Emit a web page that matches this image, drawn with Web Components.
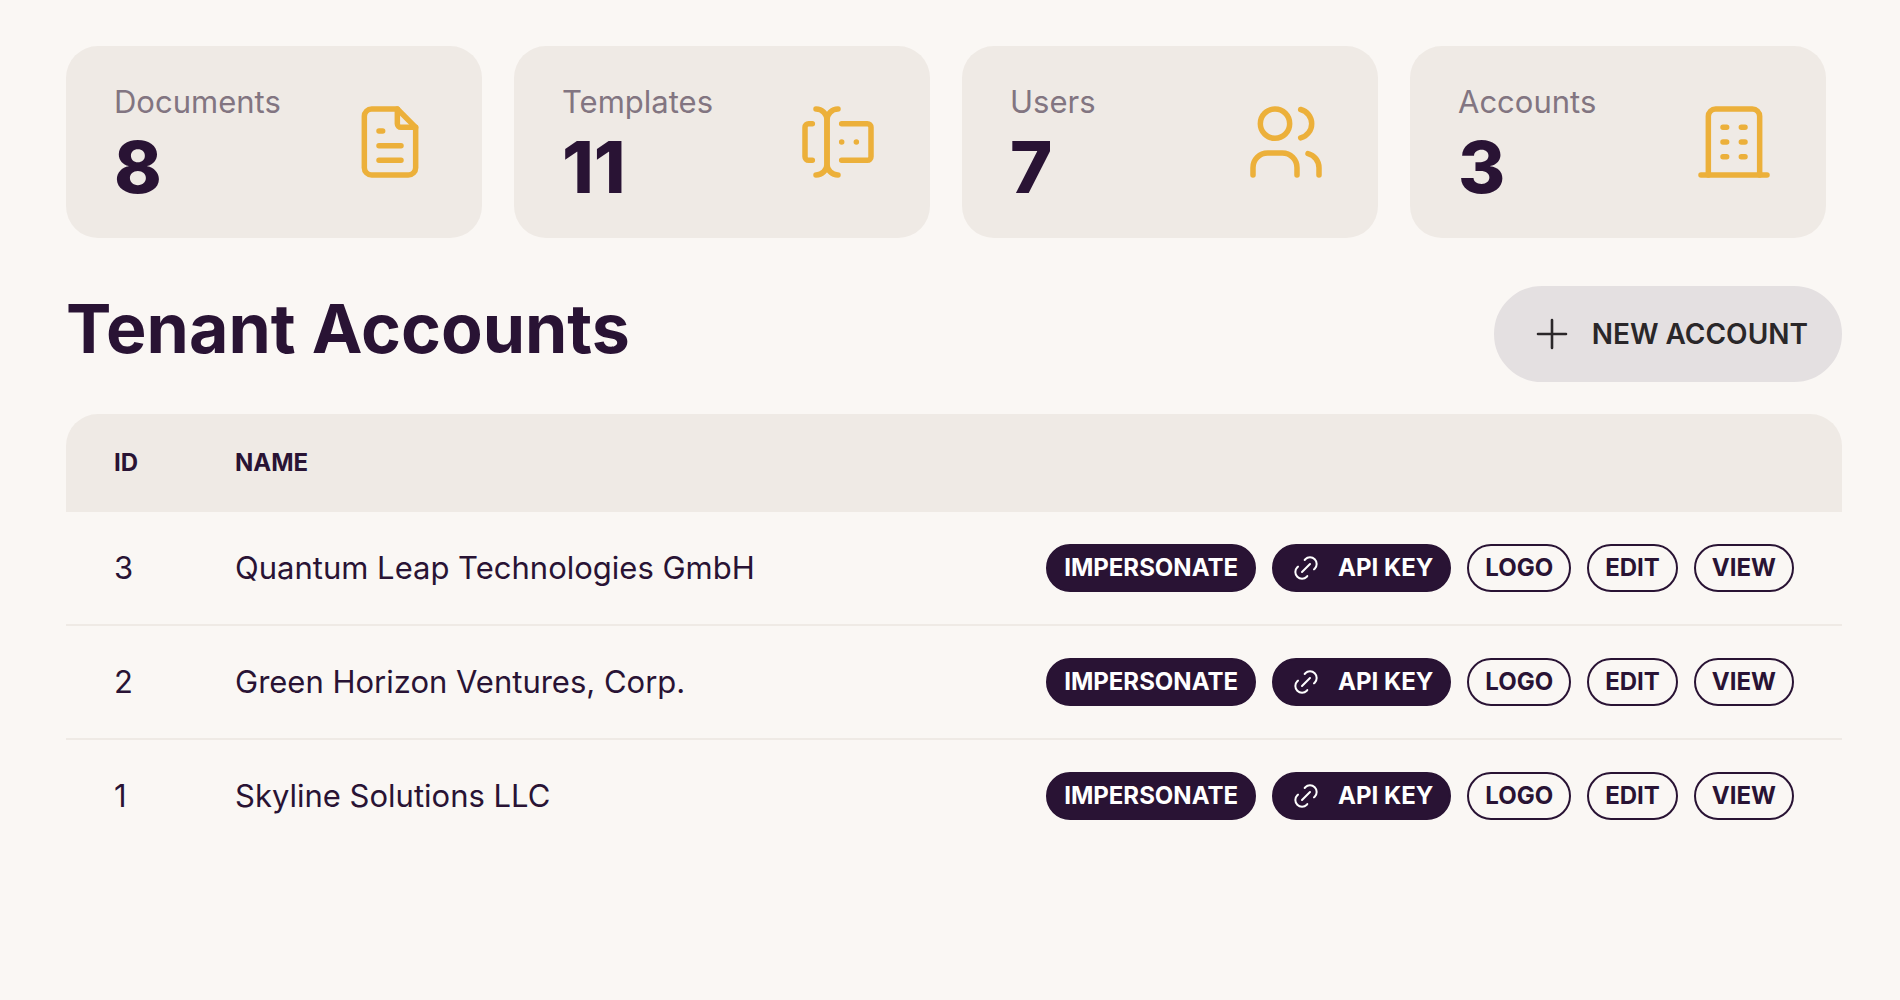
<!DOCTYPE html>
<html lang="en">
<head>
<meta charset="utf-8">
<meta name="viewport" content="width=device-width, initial-scale=1">
<title>Tenant Accounts</title>
<style>
  :root {
    --base-100: #faf7f4;
    --base-200: #efeae5;
    --neutral: #291334;
    --neutral-soft: #827581;
    --accent: #ecb03a;
    --button: #e4e0e1;
    --button-ink: #2a2729;
  }
  body {
    margin: 0;
    background: var(--base-100);
    color: var(--neutral);
    font: 31px/48px Inter, "Liberation Sans", sans-serif;
  }
</style>
</head>
<body>
<tenant-dashboard></tenant-dashboard>

<script>
const ICONS = {
  document: '<path d="M14 3v4a1 1 0 0 0 1 1h4"/><path d="M17 21H7a2 2 0 0 1-2-2V5a2 2 0 0 1 2-2h7l5 5v11a2 2 0 0 1-2 2z"/><path d="M9 9h1M9 13h6M9 17h6"/>',
  template: '<path d="M12 3a3 3 0 0 0-3 3v12a3 3 0 0 0 3 3"/><path d="M6 3a3 3 0 0 1 3 3v12a3 3 0 0 1-3 3"/><path d="M13 7h7a1 1 0 0 1 1 1v8a1 1 0 0 1-1 1h-7"/><path d="M5 7H4a1 1 0 0 0-1 1v8a1 1 0 0 0 1 1h1"/><path d="M17 12h.01M13 12h.01"/>',
  users: '<circle cx="9" cy="7" r="4"/><path d="M3 21v-2a4 4 0 0 1 4-4h4a4 4 0 0 1 4 4v2"/><path d="M16 3.13a4 4 0 0 1 0 7.75M21 21v-2a4 4 0 0 0-3-3.85"/>',
  building: '<path d="M3 21h18M9 8h1M9 12h1M9 16h1M14 8h1M14 12h1M14 16h1"/><path d="M5 21V5a2 2 0 0 1 2-2h10a2 2 0 0 1 2 2v16"/>',
  plus: '<path d="M12 5v14M5 12h14"/>',
  link: '<path d="M9 15l6-6"/><path d="M11 6l.463-.536a5 5 0 0 1 7.071 7.072L18 13"/><path d="M13 18l-.397.534a5.068 5.068 0 0 1-7.127 0 4.972 4.972 0 0 1 0-7.071L6 11"/>'
};

class LineIcon extends HTMLElement {
  connectedCallback() {
    if (this.shadowRoot) return;
    this.attachShadow({ mode: 'open' }).innerHTML = `
      <style>
        :host { display: block; flex: none; width: var(--icon-size, 32px); height: var(--icon-size, 32px); }
        svg { display: block; width: 100%; height: 100%; fill: none; stroke: currentColor;
              stroke-width: var(--icon-stroke, 1.5); stroke-linecap: round; stroke-linejoin: round; }
      </style>
      <svg viewBox="0 0 24 24" aria-hidden="true">${ICONS[this.getAttribute('name')]}</svg>`;
  }
}

class StatCard extends HTMLElement {
  connectedCallback() {
    if (this.shadowRoot) return;
    this.attachShadow({ mode: 'open' }).innerHTML = `
      <style>
        :host { display: flex; align-items: center; justify-content: space-between; box-sizing: border-box;
                padding: 30px 48px; border-radius: 32px; background: var(--base-200); }
        .label { padding-top: 2px; color: var(--neutral-soft); line-height: 48px; }
        .value { font-size: 72px; line-height: 82px; font-weight: 800; }
        line-icon { --icon-size: 88px; color: var(--accent); }
      </style>
      <div>
        <div class="label"><slot name="label"></slot></div>
        <div class="value"><slot></slot></div>
      </div>
      <line-icon name="${this.getAttribute('icon')}"></line-icon>`;
  }
}

class PillButton extends HTMLElement {
  connectedCallback() {
    if (this.shadowRoot) return;
    const href = this.getAttribute('href');
    const icon = this.getAttribute('icon');
    const body = `${icon ? `<line-icon name="${icon}"></line-icon>` : ''}<slot></slot>`;
    this.attachShadow({ mode: 'open' }).innerHTML = `
      <style>
        :host { display: block; flex: none; }
        a, button {
          display: flex; align-items: center; gap: 16px; box-sizing: border-box;
          height: 48px; margin: 0; padding: 0 16px; border: 2px solid var(--neutral); border-radius: 48px;
          background: transparent; color: var(--neutral); cursor: pointer;
          font: 700 24px/24px Inter, "Liberation Sans", sans-serif;
          text-decoration: none; text-transform: uppercase; white-space: nowrap;
        }
        :host([kind="solid"]) :is(a, button) { background: var(--neutral); color: #fff; }
        :host([kind="large"]) :is(a, button) {
          height: 96px; padding: 0 32px; font-size: 28px; line-height: 28px; font-weight: 600;
          background: var(--button); border-color: var(--button); color: var(--button-ink);
        }
        :host([kind="large"]) { --icon-size: 48px; --icon-stroke: 1.3; }
      </style>
      ${href ? `<a href="${href}">${body}</a>` : `<button type="button">${body}</button>`}`;
  }
}

class AccountTable extends HTMLElement {
  static accounts = [
    { id: 3, name: 'Quantum Leap Technologies GmbH' },
    { id: 2, name: 'Green Horizon Ventures, Corp.' },
    { id: 1, name: 'Skyline Solutions LLC' }
  ];
  connectedCallback() {
    if (this.shadowRoot) return;
    const rows = AccountTable.accounts.map(({ id, name }) => `
      <tr>
        <td>${id}</td>
        <td>${name}</td>
        <td>
          <div class="actions">
            <pill-button kind="solid">Impersonate</pill-button>
            <pill-button kind="solid" icon="link">API Key</pill-button>
            <pill-button href="#logo-${id}">Logo</pill-button>
            <pill-button href="#edit-${id}">Edit</pill-button>
            <pill-button href="#view-${id}">View</pill-button>
          </div>
        </td>
      </tr>`).join('');
    this.attachShadow({ mode: 'open' }).innerHTML = `
      <style>
        :host { display: block; }
        table { width: 100%; border-spacing: 0; text-align: left; }
        th { padding: 32px 0; background: var(--base-200); font-size: 24px; line-height: 34px;
             font-weight: 700; text-transform: uppercase; }
        th:first-child { width: 121px; border-top-left-radius: 32px; }
        th:last-child { border-top-right-radius: 32px; }
        td { padding: 32px 0; border-bottom: 2px solid var(--base-200); }
        tr > :first-child { padding-left: 48px; }
        tr > :last-child { padding-right: 48px; }
        tbody tr:last-child td { border-bottom: 0; }
        .actions { display: flex; justify-content: flex-end; gap: 16px; }
      </style>
      <table>
        <thead><tr><th scope="col">ID</th><th scope="col">Name</th><th></th></tr></thead>
        <tbody>${rows}</tbody>
      </table>`;
  }
}

class TenantDashboard extends HTMLElement {
  connectedCallback() {
    if (this.shadowRoot) return;
    this.attachShadow({ mode: 'open' }).innerHTML = `
      <style>
        :host { display: block; padding: 46px 58px 46px 66px; }
        .stats { display: grid; grid-template-columns: repeat(4, 1fr); gap: 32px; margin-right: 16px; }
        header { display: flex; align-items: flex-end; justify-content: space-between; margin: 48px 0 32px; }
        h1 { margin: 0 0 16px; font-size: 68px; line-height: 76px; font-weight: 700; }
      </style>
      <main>
        <section class="stats">
          <stat-card icon="document"><span slot="label">Documents</span>8</stat-card>
          <stat-card icon="template"><span slot="label">Templates</span>11</stat-card>
          <stat-card icon="users"><span slot="label">Users</span>7</stat-card>
          <stat-card icon="building"><span slot="label">Accounts</span>3</stat-card>
        </section>
        <header>
          <h1>Tenant Accounts</h1>
          <pill-button kind="large" icon="plus" href="#new">New Account</pill-button>
        </header>
        <account-table></account-table>
      </main>`;
  }
}

customElements.define('line-icon', LineIcon);
customElements.define('stat-card', StatCard);
customElements.define('pill-button', PillButton);
customElements.define('account-table', AccountTable);
customElements.define('tenant-dashboard', TenantDashboard);
</script>
</body>
</html>
